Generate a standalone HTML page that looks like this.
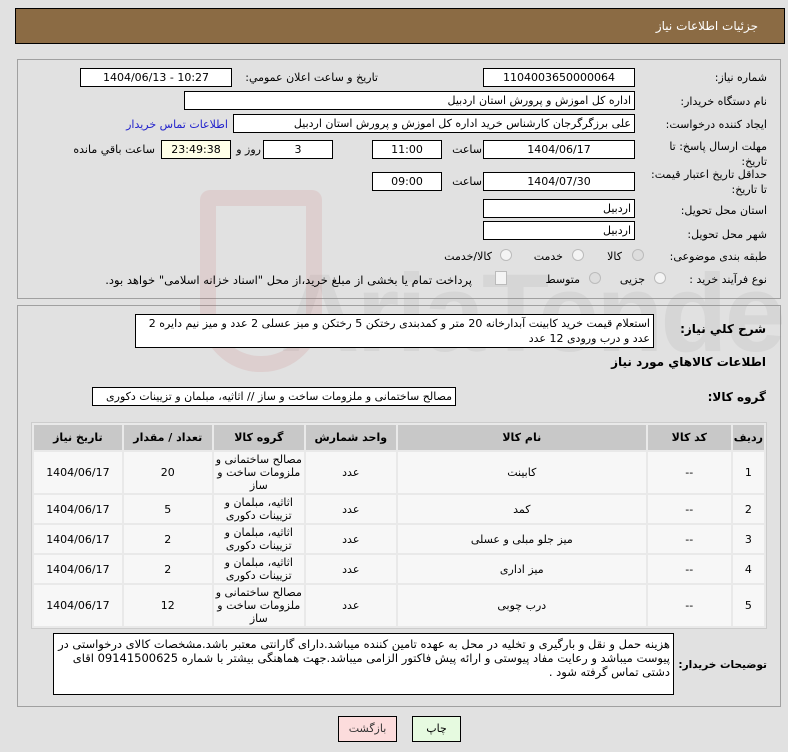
<!DOCTYPE html>
<html><head><meta charset="utf-8"><style>
body{margin:0;width:788px;height:752px;background:#e1e1e1;font-family:"DejaVu Sans","Liberation Sans",sans-serif;font-size:11px;color:#000;position:relative;overflow:hidden}
.a{position:absolute}
.b{position:absolute;background:#fff;border:1px solid #000;box-sizing:border-box;height:19px;line-height:17px;text-align:center;font-size:11px}
.r{direction:rtl;text-align:right;padding-right:3px}
.l{position:absolute;direction:rtl;text-align:right;font-size:11px;white-space:nowrap}
.rad{position:absolute;width:12px;height:12px;border-radius:50%;border:1px solid #bbb;background:#f4f4f4;box-sizing:border-box}
table{position:absolute;left:31px;top:422px;width:736px;border-collapse:separate;border-spacing:2px;background:#e9e9e9;border:1px solid #ccc;direction:rtl;font-size:11px}
th{background:#c8c8c8;height:23px;font-weight:bold}
td{background:#f7f7f7;text-align:center;line-height:13px}
</style></head><body>
<div class="a" style="left:15px;top:8px;width:770px;height:36px;background:#8b6b44;border:1px solid #000;box-sizing:border-box"></div>
<div class="l" style="right:30px;top:19px;color:#fff;font-size:12px">جزئیات اطلاعات نیاز</div>

<div class="a" style="left:17px;top:59px;width:764px;height:240px;border:1px solid #a0a0a0;box-sizing:border-box"></div>
<div class="a" style="left:17px;top:305px;width:764px;height:402px;border:1px solid #a0a0a0;box-sizing:border-box"></div>

<div class="a" style="left:280px;top:250px;font-size:110px;font-weight:bold;color:rgba(150,150,150,0.13);font-family:'Liberation Sans',sans-serif;letter-spacing:-3px">AriaTender.net</div>
<div class="a" style="left:200px;top:190px;width:90px;height:150px;border:16px solid rgba(200,80,80,0.12);border-radius:10px 10px 60px 60px"></div>

<div class="l" style="right:21px;top:71px">شماره نیاز:</div>
<div class="b" style="left:483px;top:68px;width:152px">1104003650000064</div>
<div class="l" style="right:410px;top:71px">تاریخ و ساعت اعلان عمومي:</div>
<div class="b" style="left:80px;top:68px;width:152px">1404/06/13 - 10:27</div>

<div class="l" style="right:21px;top:95px">نام دستگاه خریدار:</div>
<div class="b r" style="left:184px;top:91px;width:451px">اداره کل اموزش و پرورش استان اردبیل</div>

<div class="l" style="right:21px;top:118px">ایجاد کننده درخواست:</div>
<div class="b r" style="left:233px;top:114px;width:402px">علی برزگرگرجان کارشناس خرید اداره کل اموزش و پرورش استان اردبیل</div>
<div class="l" style="right:560px;top:118px;color:#2222cc">اطلاعات تماس خریدار</div>

<div class="l" style="right:21px;top:139px;line-height:15px">مهلت ارسال پاسخ: تا<br>تاریخ:</div>
<div class="b" style="left:483px;top:140px;width:152px">1404/06/17</div>
<div class="l" style="right:306px;top:143px">ساعت</div>
<div class="b" style="left:372px;top:140px;width:70px">11:00</div>
<div class="b" style="left:263px;top:140px;width:70px">3</div>
<div class="l" style="right:527px;top:143px">روز و</div>
<div class="b" style="left:161px;top:140px;width:70px;background:#ffffe8">23:49:38</div>
<div class="l" style="right:633px;top:143px">ساعت باقي مانده</div>

<div class="l" style="right:21px;top:167px;line-height:15px">حداقل تاریخ اعتبار قیمت:<br>تا تاریخ:</div>
<div class="b" style="left:483px;top:172px;width:152px">1404/07/30</div>
<div class="l" style="right:306px;top:175px">ساعت</div>
<div class="b" style="left:372px;top:172px;width:70px">09:00</div>

<div class="l" style="right:21px;top:204px">استان محل تحویل:</div>
<div class="b r" style="left:483px;top:199px;width:152px">اردبیل</div>
<div class="l" style="right:21px;top:228px">شهر محل تحویل:</div>
<div class="b r" style="left:483px;top:221px;width:152px">اردبیل</div>

<div class="l" style="right:21px;top:250px">طبقه بندی موضوعی:</div>
<div class="rad" style="left:632px;top:249px;background:#ddd"></div>
<div class="l" style="right:166px;top:250px">کالا</div>
<div class="rad" style="left:572px;top:249px"></div>
<div class="l" style="right:225px;top:250px">خدمت</div>
<div class="rad" style="left:500px;top:249px"></div>
<div class="l" style="right:296px;top:250px">کالا/خدمت</div>

<div class="l" style="right:21px;top:273px">نوع فرآیند خرید :</div>
<div class="rad" style="left:654px;top:272px"></div>
<div class="l" style="right:143px;top:273px">جزیی</div>
<div class="rad" style="left:589px;top:272px;background:#ddd"></div>
<div class="l" style="right:208px;top:273px">متوسط</div>
<div class="a" style="left:495px;top:271px;width:10px;height:12px;border:1px solid #bbb;background:#f4f4f4"></div>
<div class="l" style="right:316px;top:273px;font-size:11.5px">پرداخت تمام یا بخشی از مبلغ خرید،از محل "اسناد خزانه اسلامی" خواهد بود.</div>

<div class="l" style="right:22px;top:322px;font-weight:bold;font-size:12px">شرح کلي نیاز:</div>
<div class="a" style="left:135px;top:314px;width:519px;height:34px;background:#fff;border:1px solid #000;box-sizing:border-box;direction:rtl;text-align:right;padding:1px 3px;line-height:15px;font-size:11px">استعلام قیمت خرید کابینت آبدارخانه  20 متر و کمدبندی رختکن 5 رختکن و میز عسلی 2 عدد و میز نیم دایره 2 عدد و درب ورودی 12 عدد</div>
<div class="l" style="right:22px;top:355px;font-weight:bold;font-size:12px">اطلاعات کالاهاي مورد نیاز</div>
<div class="l" style="right:22px;top:390px;font-weight:bold;font-size:12px">گروه کالا:</div>
<div class="b r" style="left:92px;top:387px;width:364px">مصالح ساختمانی و ملزومات ساخت و ساز // اثاثیه، مبلمان و تزیینات دکوری</div>

<table>
<tr><th style="width:24px">ردیف</th><th style="width:81px">کد کالا</th><th style="width:246px">نام کالا</th><th style="width:88px">واحد شمارش</th><th style="width:88px">گروه کالا</th><th style="width:86px">تعداد / مقدار</th><th>تاریخ نیاز</th></tr>
<tr style="height:40px"><td>1</td><td>--</td><td>کابینت</td><td>عدد</td><td>مصالح ساختمانی و ملزومات ساخت و ساز</td><td>20</td><td>1404/06/17</td></tr>
<tr style="height:28px"><td>2</td><td>--</td><td>کمد</td><td>عدد</td><td>اثاثیه، مبلمان و تزیینات دکوری</td><td>5</td><td>1404/06/17</td></tr>
<tr style="height:28px"><td>3</td><td>--</td><td>میز جلو مبلی و عسلی</td><td>عدد</td><td>اثاثیه، مبلمان و تزیینات دکوری</td><td>2</td><td>1404/06/17</td></tr>
<tr style="height:28px"><td>4</td><td>--</td><td>میز اداری</td><td>عدد</td><td>اثاثیه، مبلمان و تزیینات دکوری</td><td>2</td><td>1404/06/17</td></tr>
<tr style="height:40px"><td>5</td><td>--</td><td>درب چوبی</td><td>عدد</td><td>مصالح ساختمانی و ملزومات ساخت و ساز</td><td>12</td><td>1404/06/17</td></tr>
</table>

<div class="l" style="right:21px;top:659px;font-weight:bold;font-size:10.5px">توضیحات خریدار:</div>
<div class="a" style="left:53px;top:633px;width:621px;height:62px;background:#fff;border:1px solid #000;box-sizing:border-box;direction:rtl;text-align:right;padding:3px 3px;line-height:14px;font-size:11.5px;letter-spacing:-0.4px">هزینه حمل و نقل و بارگیری و تخلیه در محل به عهده تامین کننده میباشد.دارای گارانتی معتبر باشد.مشخصات کالای درخواستی در پیوست میباشد و رعایت مفاد پیوستی و ارائه پیش فاکتور الزامی میباشد.جهت هماهنگی بیشتر با شماره 09141500625 اقای دشتی تماس گرفته شود .</div>

<div class="a" style="left:338px;top:716px;width:59px;height:26px;background:#fcdcdc;border:1px solid #000;box-sizing:border-box;text-align:center;line-height:24px;color:#333">بازگشت</div>
<div class="a" style="left:412px;top:716px;width:49px;height:26px;background:#e6fae0;border:1px solid #000;box-sizing:border-box;text-align:center;line-height:24px">چاپ</div>
</body></html>
